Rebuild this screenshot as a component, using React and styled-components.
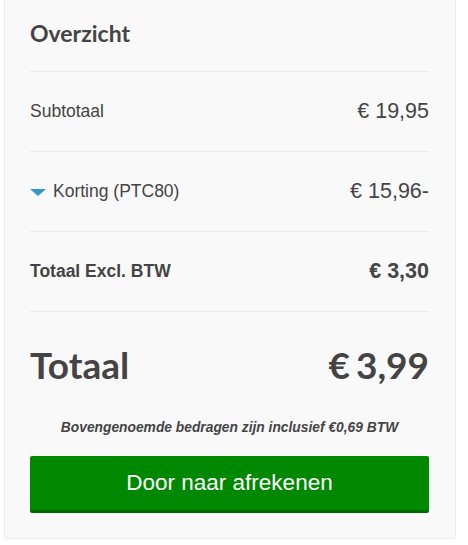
import styled, { createGlobalStyle } from "styled-components";

const GlobalStyle = createGlobalStyle`
    html, body {
        margin: 0;
        padding: 0;
        background: #fff;
    }
    body {
        font-family: "Liberation Sans", Arial, sans-serif;
        color: #444;
    }
`;

const Page = styled.div`
    padding: 0 12px 0 4px;
    width: 468px;
    box-sizing: border-box;
`;

const Card = styled.div`
    background: #f9f9f9;
    border: 1px solid #ebebeb;
    border-top: none;
    border-radius: 0 0 4px 4px;
    padding: 0 26px 25px 25px;
`;

const Heading = styled.h2`
    margin: 0;
    padding: 19px 0 24px;
    font-family: Lato, "Liberation Sans", sans-serif;
    font-weight: 700;
    font-size: 23px;
    line-height: 28px;
    color: #444;
    border-bottom: 1px solid #eaeaea;
`;

const Row = styled.div`
    display: flex;
    align-items: center;
    justify-content: space-between;
    height: 79px;
    border-bottom: 1px solid #eaeaea;
    font-weight: ${(p) => (p.$bold ? 700 : 400)};
`;

const Label = styled.span`
    display: flex;
    align-items: center;
    gap: 8px;
    font-size: 17.5px;
`;

const Amount = styled.span`
    font-size: 21.5px;
`;

const Caret = styled.span`
    width: 0;
    height: 0;
    border-left: 8.5px solid transparent;
    border-right: 8.5px solid transparent;
    border-top: 7px solid #3399cc;
    margin-top: 2px;
    margin-right: -1px;
`;

const TotalRow = styled.div`
    display: flex;
    align-items: center;
    justify-content: space-between;
    padding: 30px 0 0;
    font-family: Lato, "Liberation Sans", sans-serif;
    font-weight: 700;
    font-size: 37px;
    line-height: 46px;
    color: #444;
`;

const TotalAmount = styled.span`
    word-spacing: -3px;
`;

const Note = styled.p`
    margin: 32px 0 0;
    text-align: center;
    font-size: 13.8px;
    font-weight: 700;
    font-style: italic;
    line-height: 16px;
`;

const CheckoutButton = styled.button`
    display: block;
    width: 100%;
    height: 57px;
    margin-top: 20px;
    border: none;
    border-bottom: 3px solid #006a00;
    border-radius: 2px;
    background: #008800;
    color: #fff;
    font-family: "Liberation Sans", Arial, sans-serif;
    font-size: 22.5px;
    cursor: pointer;
`;

const App = () => {
    return (
        <Page>
            <GlobalStyle />
            <Card>
                <Heading>Overzicht</Heading>
                <Row>
                    <Label>Subtotaal</Label>
                    <Amount>€ 19,95</Amount>
                </Row>
                <Row>
                    <Label>
                        <Caret />
                        Korting (PTC80)
                    </Label>
                    <Amount>€ 15,96-</Amount>
                </Row>
                <Row $bold>
                    <Label>Totaal Excl. BTW</Label>
                    <Amount>€ 3,30</Amount>
                </Row>
                <TotalRow>
                    <span>Totaal</span>
                    <TotalAmount>€ 3,99</TotalAmount>
                </TotalRow>
                <Note>Bovengenoemde bedragen zijn inclusief €0,69 BTW</Note>
                <CheckoutButton>Door naar afrekenen</CheckoutButton>
            </Card>
        </Page>
    );
};

export default App;
